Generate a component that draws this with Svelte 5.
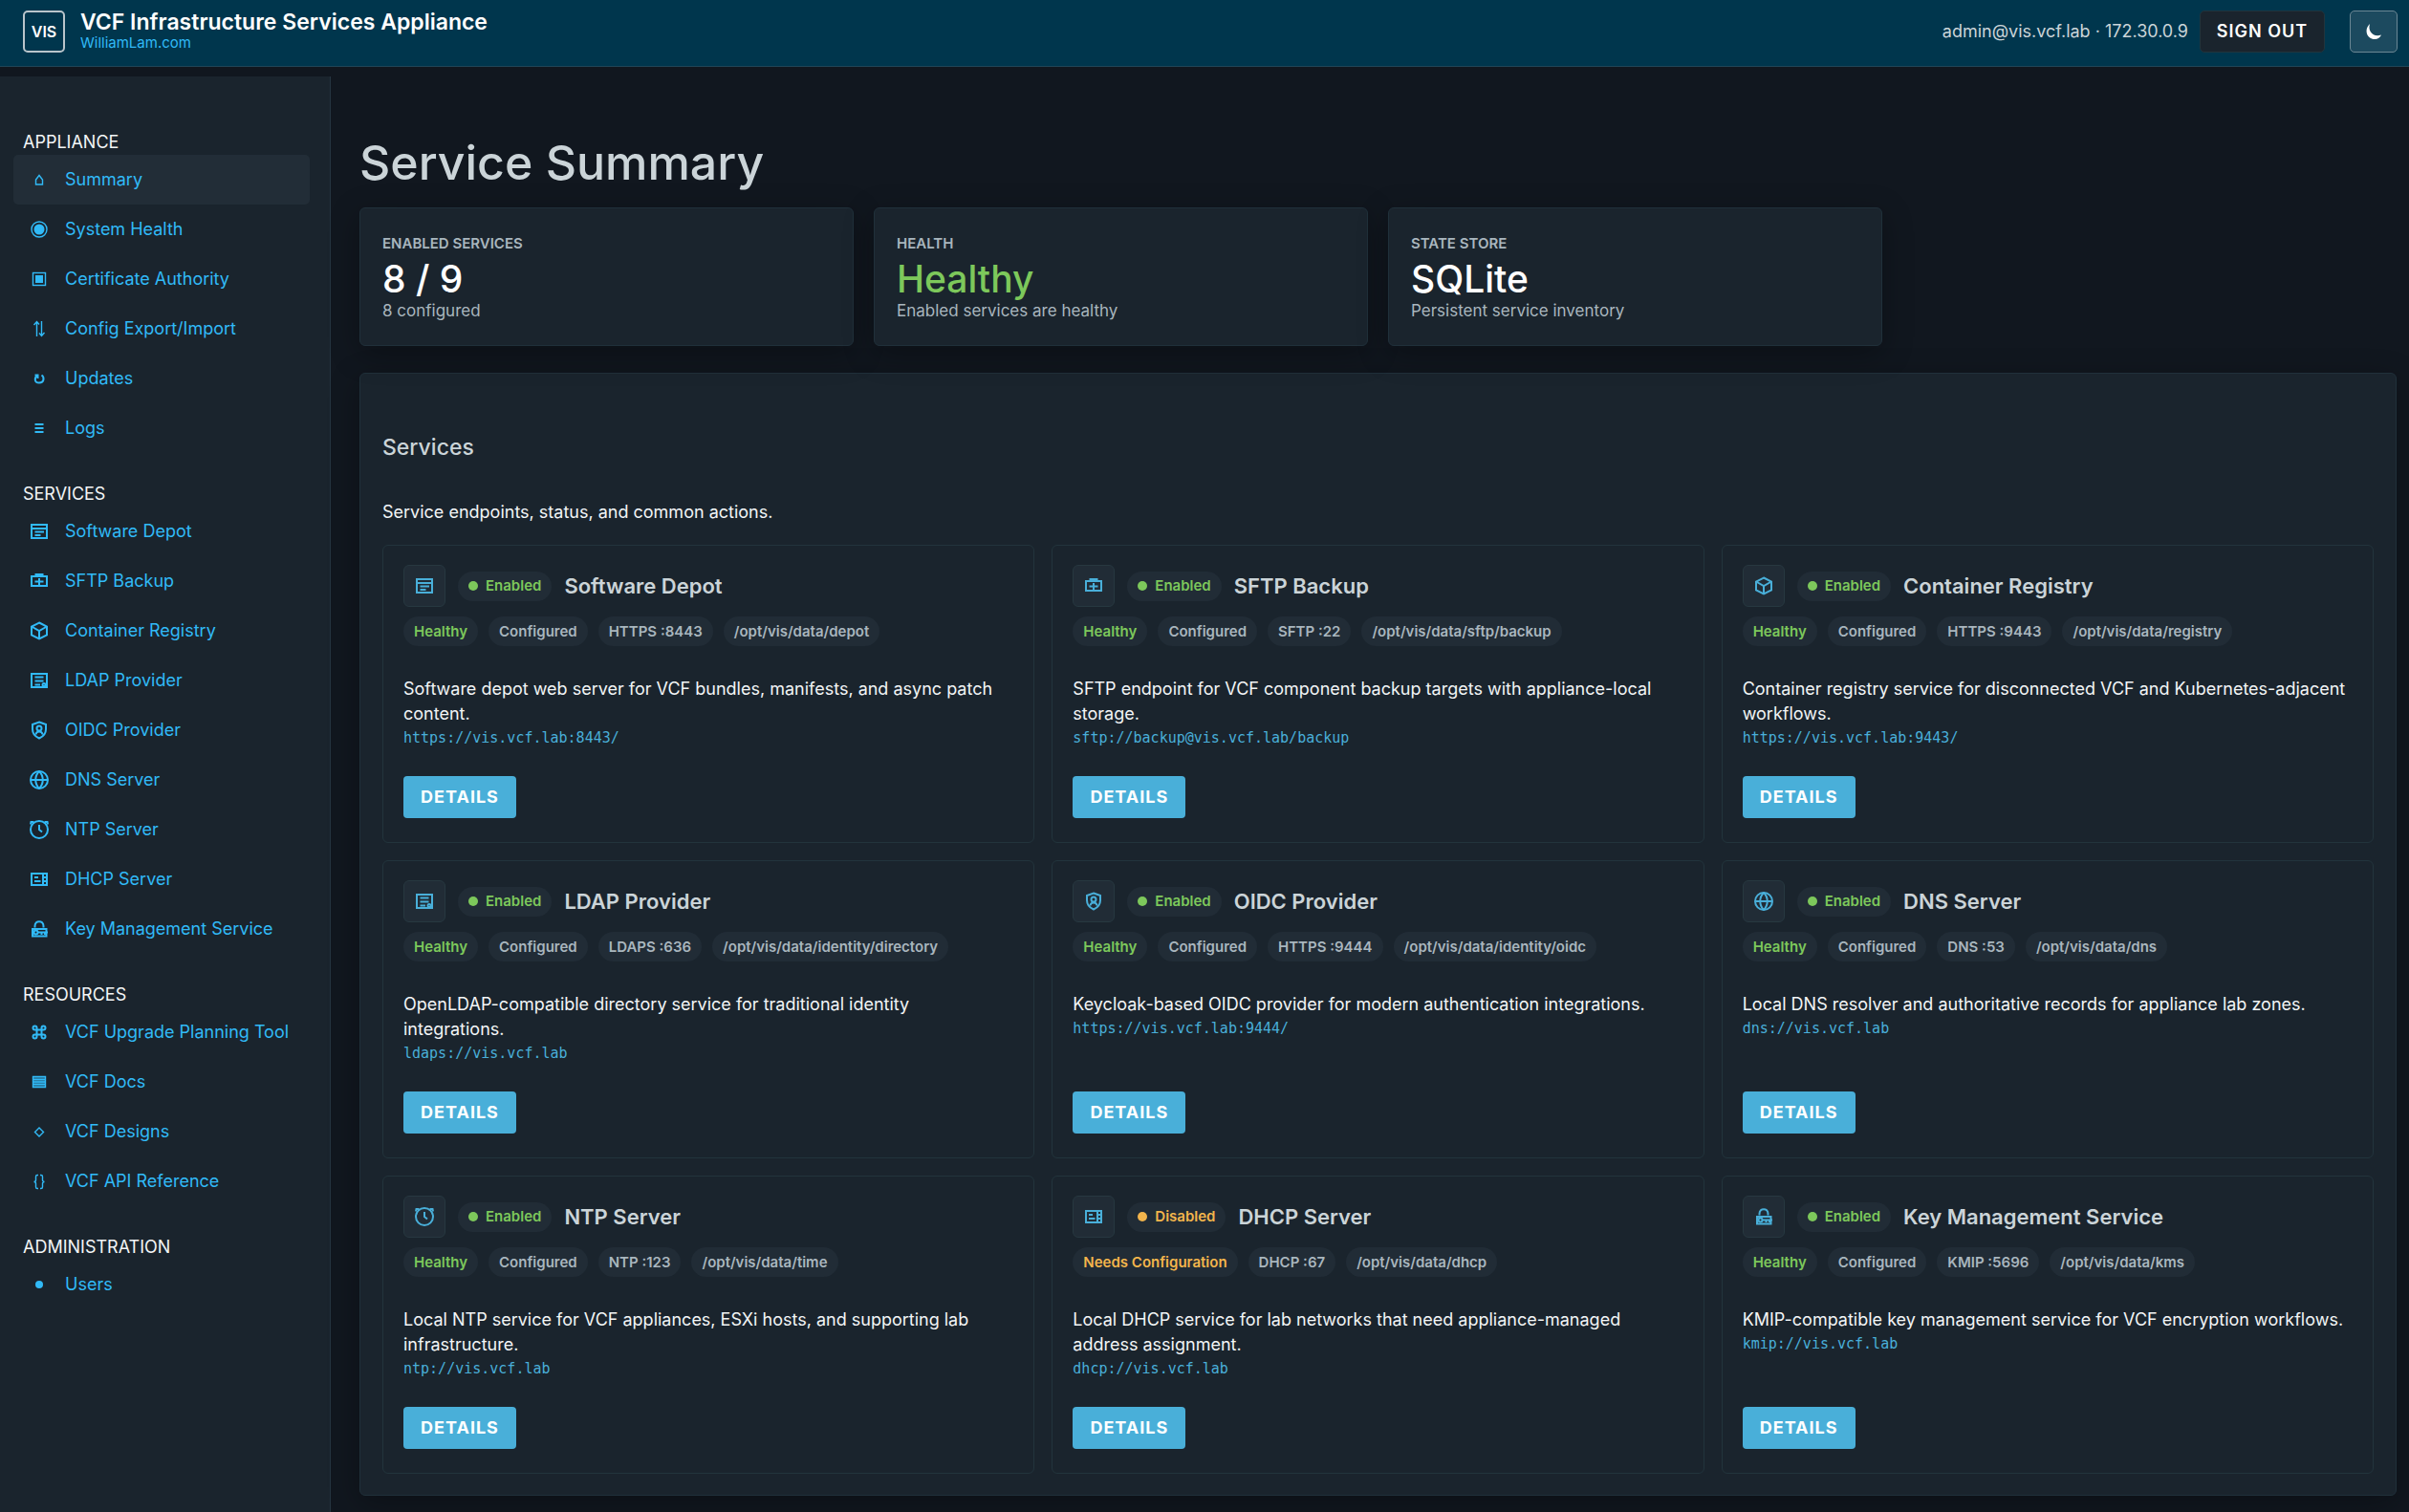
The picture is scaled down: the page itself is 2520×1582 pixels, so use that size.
<script>
    const menu = [
        {
            title: "Appliance",
            items: [
                { icon: "home", label: "Summary", active: true },
                { icon: "target", label: "System Health" },
                { icon: "cert", label: "Certificate Authority" },
                { icon: "swap", label: "Config Export/Import" },
                { icon: "refresh", label: "Updates" },
                { icon: "lines", label: "Logs" },
            ],
        },
        {
            title: "Services",
            items: [
                { icon: "depot", label: "Software Depot" },
                { icon: "backup", label: "SFTP Backup" },
                { icon: "registry", label: "Container Registry" },
                { icon: "ldap", label: "LDAP Provider" },
                { icon: "oidc", label: "OIDC Provider" },
                { icon: "dns", label: "DNS Server" },
                { icon: "ntp", label: "NTP Server" },
                { icon: "dhcp", label: "DHCP Server" },
                { icon: "kms", label: "Key Management Service" },
            ],
        },
        {
            title: "Resources",
            items: [
                { icon: "command", label: "VCF Upgrade Planning Tool" },
                { icon: "docs", label: "VCF Docs" },
                { icon: "diamond", label: "VCF Designs" },
                { icon: "braces", label: "VCF API Reference" },
            ],
        },
        {
            title: "Administration",
            items: [{ icon: "dot", label: "Users" }],
        },
    ];

    const stats = [
        { label: "Enabled Services", value: "8 / 9", note: "8 configured" },
        { label: "Health", value: "Healthy", note: "Enabled services are healthy", good: true },
        { label: "State Store", value: "SQLite", note: "Persistent service inventory" },
    ];

    const services = [
        {
            icon: "depot", name: "Software Depot", port: "HTTPS :8443", path: "/opt/vis/data/depot",
            text: "Software depot web server for VCF bundles, manifests, and async patch content.",
            url: "https://vis.vcf.lab:8443/",
        },
        {
            icon: "backup", name: "SFTP Backup", port: "SFTP :22", path: "/opt/vis/data/sftp/backup",
            text: "SFTP endpoint for VCF component backup targets with appliance-local storage.",
            url: "sftp://backup@vis.vcf.lab/backup",
        },
        {
            icon: "registry", name: "Container Registry", port: "HTTPS :9443", path: "/opt/vis/data/registry",
            text: "Container registry service for disconnected VCF and Kubernetes-adjacent workflows.",
            url: "https://vis.vcf.lab:9443/",
        },
        {
            icon: "ldap", name: "LDAP Provider", port: "LDAPS :636", path: "/opt/vis/data/identity/directory",
            text: "OpenLDAP-compatible directory service for traditional identity integrations.",
            url: "ldaps://vis.vcf.lab",
        },
        {
            icon: "oidc", name: "OIDC Provider", port: "HTTPS :9444", path: "/opt/vis/data/identity/oidc",
            text: "Keycloak-based OIDC provider for modern authentication integrations.",
            url: "https://vis.vcf.lab:9444/",
        },
        {
            icon: "dns", name: "DNS Server", port: "DNS :53", path: "/opt/vis/data/dns",
            text: "Local DNS resolver and authoritative records for appliance lab zones.",
            url: "dns://vis.vcf.lab",
        },
        {
            icon: "ntp", name: "NTP Server", port: "NTP :123", path: "/opt/vis/data/time",
            text: "Local NTP service for VCF appliances, ESXi hosts, and supporting lab infrastructure.",
            url: "ntp://vis.vcf.lab",
        },
        {
            icon: "dhcp", name: "DHCP Server", port: "DHCP :67", path: "/opt/vis/data/dhcp", disabled: true,
            text: "Local DHCP service for lab networks that need appliance-managed address assignment.",
            url: "dhcp://vis.vcf.lab",
        },
        {
            icon: "kms", name: "Key Management Service", port: "KMIP :5696", path: "/opt/vis/data/kms",
            text: "KMIP-compatible key management service for VCF encryption workflows.",
            url: "kmip://vis.vcf.lab",
        },
    ];
</script>

{#snippet icon(name)}
    <svg viewBox="0 0 24 24" aria-hidden="true">
        {#if name === "home"}
            <path class="thin" d="M8.5 12 L12 7.5 L15.5 12 V17 H8.5 Z" />
        {:else if name === "target"}
            <circle class="thin" cx="12" cy="12" r="8" />
            <circle class="fill" cx="12" cy="12" r="5.5" />
        {:else if name === "cert"}
            <rect class="thin" x="5.5" y="5.5" width="13" height="13" />
            <rect class="fill" x="8" y="8" width="8" height="8" />
        {:else if name === "swap"}
            <path class="thin" d="M9.5 20 V4.5 M6.5 8 L9.5 4.5 L12 7.5 M14.5 4 V19.5 M12 16.5 L14.5 19.5 L17.5 16" />
        {:else if name === "refresh"}
            <path d="M7.5 8.5 H10.5 V12 M10 9 C7 11 6.5 16.5 12 16.5 C17.5 16.5 17.5 10.5 14.5 8.5" />
        {:else if name === "lines"}
            <path d="M7.5 8 H16.5 M7.5 12 H16.5 M7.5 16 H16.5" />
        {:else if name === "depot"}
            <path d="M4 5 H20 V19 H4 Z M4 9 H20 M7.5 12.5 H17 M7.5 16 H13.5" />
        {:else if name === "backup"}
            <path d="M4 7 H20 V17 H4 Z M8.5 7 V5 H15.5 V7 M12 9 V16 M7.5 12.5 H16.5" />
        {:else if name === "registry"}
            <path d="M12 3.5 L20 7.5 V16.5 L12 20.5 L4 16.5 V7.5 Z M4 7.5 L12 12 L20 7.5 M12 12 V20" />
        {:else if name === "ldap"}
            <path d="M4 5 H20 V19 H4 Z M7.5 8.5 H16.5 M7.5 12.5 H16.5 M7.5 16.5 H13" />
            <circle cx="17" cy="16.5" r="1.5" />
        {:else if name === "oidc"}
            <path d="M12 3.5 L19 6 V11 C19 16 16.5 18.5 12 20.5 C7.500 18.500 5 16 5 11 V6 Z M8.500 16.500 C9 12.500 15 12.500 15.500 16.500" />
            <circle cx="12" cy="10" r="2.5" />
        {:else if name === "dns"}
            <circle cx="12" cy="12" r="9" />
            <path d="M3 12 H21 M12 3 C7 8 7 16 12 21 M12 3 C17 8 17 16 12 21" />
        {:else if name === "ntp"}
            <circle cx="12" cy="12" r="9" />
            <path d="M12 7 V12 L15 14.5 M3 6.5 L3.5 4 L6.5 4 M21 6.5 L20.5 4 L17.5 4" />
        {:else if name === "dhcp"}
            <path d="M4 6 H20 V18 H4 Z M16 6 V18 M16 10 H20 M16 14 H20 M7 10 H11 M7 14 H13.5" />
        {:else if name === "kms"}
            <path d="M5 12 H19.5 V19.5 H5 Z M7.5 10.5 V9 C7.5 2.5 16.5 2.5 16.5 9 V10.5 M10 15.5 H21 M14.500 15.500 V18 M18 15.500 V18" />
            <circle cx="8.5" cy="15.5" r="2" />
        {:else if name === "command"}
            <path d="M9.5 9.5 H14.5 V14.5 H9.5 Z M9.5 9.5 H7.5 A2 2 0 1 1 9.5 7.5 Z M14.5 9.5 V7.5 A2 2 0 1 1 16.5 9.5 Z M14.5 14.5 H16.5 A2 2 0 1 1 14.5 16.5 Z M9.5 14.5 V16.5 A2 2 0 1 1 7.5 14.5 Z" />
        {:else if name === "docs"}
            <rect class="fill dim" x="5" y="6" width="14" height="12" />
            <path class="thin" d="M5.5 6.5 H18.5 V17.5 H5.5 Z M6 9.5 H18 M6 12 H18 M6 14.5 H18" />
        {:else if name === "diamond"}
            <path class="thin" d="M12 8 L16.5 12.5 L12 17 L7.5 12.5 Z" />
        {:else if name === "braces"}
            <path class="thin" d="M11 5.500 H10 Q8.500 5.500 8.500 7 V10.500 Q8.500 12.500 6.500 12.500 Q8.500 12.500 8.500 14.500 V18 Q8.500 19.500 10 19.500 H11 M13 5.500 H14 Q15.500 5.500 15.500 7 V10.500 Q15.500 12.500 17.500 12.500 Q15.500 12.500 15.500 14.500 V18 Q15.500 19.500 14 19.500 H13" />
        {:else if name === "dot"}
            <circle class="fill" cx="12" cy="12" r="4" />
        {/if}
    </svg>
{/snippet}

<div class="page">
    <header>
        <div class="logo">VIS</div>
        <div class="brand">
            <strong>VCF Infrastructure Services Appliance</strong>
            <a href="#home">WilliamLam.com</a>
        </div>
        <span class="user">admin@vis.vcf.lab · 172.30.0.9</span>
        <button class="signout">SIGN OUT</button>
        <button class="theme" aria-label="Toggle theme">
            <svg viewBox="0 0 24 24" aria-hidden="true">
                <path class="fill" d="M8 4 C1.5 10 5 20 13 20 C16.5 20 19 18 20 15.5 C12 18.5 5.5 12 8 4 Z" />
            </svg>
        </button>
    </header>

    <div class="body">
        <nav>
            {#each menu as group}
                <h2>{group.title}</h2>
                {#each group.items as item}
                    <a href="#nav" class:active={item.active}>
                        {@render icon(item.icon)}
                        {item.label}
                    </a>
                {/each}
            {/each}
        </nav>

        <main>
            <h1>Service Summary</h1>
            <div class="stats">
                {#each stats as stat}
                    <div class="stat">
                        <div class="stat-label">{stat.label}</div>
                        <div class="stat-value" class:good={stat.good}>{stat.value}</div>
                        <div class="stat-note">{stat.note}</div>
                    </div>
                {/each}
            </div>

            <section class="panel">
                <h2>Services</h2>
                <p class="intro">Service endpoints, status, and common actions.</p>
                <div class="grid">
                    {#each services as service}
                        <article>
                            <div class="head">
                                <div class="icon-box">{@render icon(service.icon)}</div>
                                <span class="pill {service.disabled ? 'warn' : 'good'}">
                                    <i></i>{service.disabled ? "Disabled" : "Enabled"}
                                </span>
                                <h3>{service.name}</h3>
                            </div>
                            <div class="pills">
                                {#if service.disabled}
                                    <span class="pill warn">Needs Configuration</span>
                                {:else}
                                    <span class="pill good">Healthy</span>
                                    <span class="pill">Configured</span>
                                {/if}
                                <span class="pill">{service.port}</span>
                                <span class="pill">{service.path}</span>
                            </div>
                            <p class="text">{service.text}</p>
                            <code>{service.url}</code>
                            <button class="details">DETAILS</button>
                        </article>
                    {/each}
                </div>
            </section>
        </main>
    </div>
</div>

<style>
    :global(body) {
        background: #11171f;
    }

    .page {
        min-height: 100vh;
        display: flex;
        flex-direction: column;
        box-sizing: border-box;
        font-family: Inter, "Open Sans", sans-serif;
        font-size: 18px;
        line-height: 26px;
        color: #f2f5f6;
    }

    .page * {
        box-sizing: border-box;
    }

    h1, h2, h3, p {
        margin: 0;
        font-weight: 400;
    }

    a {
        color: #31baf7;
        text-decoration: none;
    }

    button {
        font: inherit;
        cursor: pointer;
    }

    svg {
        width: 24px;
        height: 24px;
        fill: none;
        stroke: currentColor;
        stroke-width: 2;
        flex: none;
    }

    .thin {
        stroke-width: 1.4;
    }

    .fill {
        fill: currentColor;
        stroke: none;
    }

    .dim {
        opacity: .5;
    }

    header {
        display: flex;
        align-items: center;
        height: 70px;
        padding: 0 12px 4px 24px;
        background: #00364d;
        border-bottom: 1px solid #214557;
    }

    .logo {
        width: 44px;
        height: 44px;
        display: grid;
        place-items: center;
        border: 2px solid #b9c5cb;
        border-radius: 5px;
        font-size: 16px;
        font-weight: 600;
        color: #fff;
    }

    .brand {
        display: flex;
        flex-direction: column;
        margin-left: 16px;
    }

    .brand strong {
        font-size: 23px;
        font-weight: 600;
        line-height: 24px;
        color: #fff;
    }

    .brand a {
        font-size: 15px;
        line-height: 20px;
    }

    .user {
        margin-left: auto;
        color: #cbd4d8;
    }

    .signout {
        width: 131px;
        height: 44px;
        margin-left: 12px;
        padding: 0;
        border: 1px solid #22343c;
        border-radius: 5px;
        background: #1a242d;
        color: #fff;
        font-weight: 600;
        letter-spacing: 1px;
    }

    .theme {
        width: 50px;
        height: 44px;
        margin-left: 26px;
        padding: 0;
        display: grid;
        place-items: center;
        border: 1px solid #6b8794;
        border-radius: 5px;
        background: #1c4a5f;
        color: #fff;
    }

    .body {
        flex: 1;
        display: flex;
        padding-top: 10px;
    }

    nav {
        width: 346px;
        flex: none;
        padding: 26px 21px 0 14px;
        background: #1a242d;
        border-right: 1px solid #263541;
    }

    nav h2 {
        height: 56px;
        padding: 30px 0 0 10px;
        font-size: 18px;
        line-height: 26px;
        text-transform: uppercase;
    }

    nav a {
        display: flex;
        align-items: center;
        gap: 15px;
        height: 52px;
        padding-left: 15px;
        border-radius: 5px;
    }

    nav a.active {
        background: #222d37;
    }

    main {
        flex: 1;
        min-width: 0;
        padding: 56px 13px 16px 30px;
    }

    h1 {
        font-size: 50px;
        font-weight: 500;
        line-height: 68px;
        color: #cbd4d8;
    }

    .stats {
        display: grid;
        grid-template-columns: repeat(4, 1fr);
        gap: 21px;
        margin: 13px 0 28px;
    }

    .stat,
    .panel {
        background: #1a242d;
        border: 1px solid #20303a;
        border-radius: 6px;
        box-shadow: 0 8px 32px rgba(0, 0, 0, .3);
    }

    .stat {
        min-height: 145px;
        padding: 24px 23px;
    }

    .stat-label {
        font-size: 15px;
        font-weight: 600;
        line-height: 26px;
        color: #a9b6be;
        text-transform: uppercase;
    }

    .stat-value {
        font-size: 39px;
        font-weight: 500;
        line-height: 48px;
        color: #fff;
    }

    .stat-note {
        font-size: 17px;
        line-height: 18px;
        color: #a9b6be;
    }

    .stat-value.good {
        color: #7dc85b;
    }

    .panel {
        padding: 61px 23px 22px;
    }

    .panel h2 {
        font-size: 23px;
        font-weight: 500;
        line-height: 32px;
        color: #cbd4d8;
    }

    .intro {
        padding: 39px 0 21px;
    }

    .grid {
        display: grid;
        grid-template-columns: repeat(3, 1fr);
        gap: 18px;
    }

    article {
        display: flex;
        flex-direction: column;
        align-items: flex-start;
        min-height: 312px;
        padding: 20px 20px 25px 21px;
        border: 1px solid #22343c;
        border-radius: 6px;
    }

    .head {
        display: flex;
        align-items: center;
        gap: 13px;
    }

    .icon-box {
        width: 44px;
        height: 44px;
        display: grid;
        place-items: center;
        border: 1px solid #273840;
        border-radius: 6px;
        background: #212c36;
        color: #49afd9;
    }

    h3 {
        font-size: 22px;
        font-weight: 600;
        color: #cbd4d8;
    }

    .pills {
        display: flex;
        gap: 11px;
        margin: 10px 0 32px;
    }

    .pill {
        display: flex;
        align-items: center;
        height: 31px;
        padding: 0 11px;
        border-radius: 16px;
        background: #212c36;
        font-size: 15px;
        font-weight: 600;
        color: #a9b6be;
    }

    .pill.good {
        color: #7dc85b;
    }

    .pill.warn {
        color: #f3b54c;
    }

    .pill i {
        width: 10px;
        height: 10px;
        margin-right: 8px;
        border-radius: 50%;
        background: currentColor;
    }

    .text {
        padding-right: 6px;
    }

    code {
        font-family: "DejaVu Sans Mono", monospace;
        font-size: 15px;
        line-height: 24px;
        color: #49afd9;
    }

    .details {
        width: 118px;
        height: 44px;
        margin-top: auto;
        padding: 0;
        border: 0;
        border-radius: 4px;
        background: #49afd9;
        color: #fff;
        font-weight: 700;
        letter-spacing: 1px;
    }
</style>
